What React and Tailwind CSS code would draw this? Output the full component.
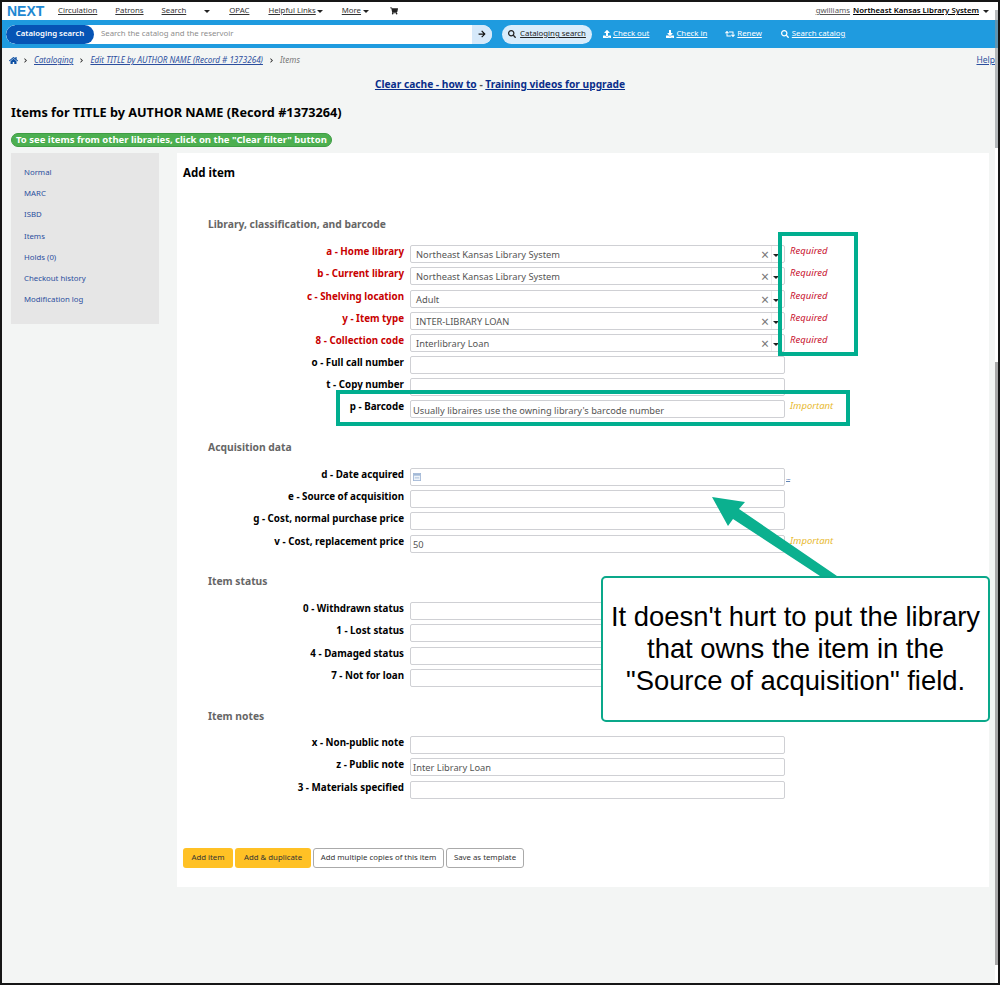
import React from "react";
import { FaHome, FaChevronRight, FaShoppingCart, FaSearch, FaUpload, FaDownload, FaRetweet, FaArrowRight } from "react-icons/fa";

const sideLinks = ["Normal", "MARC", "ISBD", "Items", "Holds (0)", "Checkout history", "Modification log"];

const Caret = ({ className = "" }) => (
  <span className={`inline-block w-0 h-0 border-x-[3px] border-x-transparent border-t-[3px] border-t-[#222] ${className}`} />
);

function Row({ label, value, select, red, note, noteColor, date, h = "h-[22.3px]" }) {
  return (
    <div className={`flex ${h}`}>
      <div className={`w-[227px] text-right font-bold text-[9.8px] leading-[14px] ${red ? "text-[#c80000]" : "text-black"}`}>{label}</div>
      <div className={`ml-[6px] w-[375px] h-[18px] bg-white border border-[#cfd0d4] rounded-[2px] flex items-center relative text-[9.3px] text-[#555] shrink-0 ${select ? "pl-[5px]" : "pl-[2px]"}`}>
        {date && (
          <svg width="8" height="8" viewBox="0 0 9 9" className="opacity-70">
            <rect x="0.5" y="0.5" width="8" height="8" fill="#e6eef7" stroke="#7c9cc6" />
            <rect x="1" y="1" width="7" height="2" fill="#7c9cc6" />
            <rect x="2" y="5" width="5" height="1" fill="#7c9cc6" />
          </svg>
        )}
        <span className="mt-[2px]">{value}</span>
        {select && (
          <>
            <span className="absolute right-[15px] top-[1px] text-[14px] leading-[16px] text-[#777]">×</span>
            <span className="absolute right-[12px] top-0 h-full w-px bg-[#eee]" />
            <Caret className="absolute right-[5px] top-[8px]" />
          </>
        )}
      </div>
      {note && <i className={`ml-[5px] text-[9.5px] leading-[14px] mt-[-1px] ${noteColor}`}>{note}</i>}
      {date && <span className="ml-px mt-[6px] text-[7px] leading-[8px] tracking-[-0.5px] text-[#5f83b4] underline">...</span>}
    </div>
  );
}

const Legend = ({ children, className = "" }) => (
  <div className={`ml-[31px] font-bold text-[10.3px] leading-[14px] text-[#666] ${className}`}>{children}</div>
);

function NavLink({ children, className = "" }) {
  return <span className={`underline whitespace-nowrap ${className}`}>{children}</span>;
}

export default function App() {
  return (
    <div className="relative w-[1000px] h-[985px] overflow-hidden bg-[#f3f5f4] border-y-2 border-x-[2px] border-[#161616] font-['Noto_Sans',sans-serif]">
      {/* top nav */}
      <div className="h-[18px] bg-white flex items-center text-[7.8px] text-[#333] relative">
        <span className="ml-[5px] w-[51px] font-['Liberation_Sans',sans-serif] font-bold text-[14px] mt-[1px] text-[#1e88d2]">NEXT</span>
        <NavLink>Circulation</NavLink>
        <NavLink className="ml-[18px]">Patrons</NavLink>
        <NavLink className="ml-[18px]">Search</NavLink>
        <Caret className="ml-[18px]" />
        <NavLink className="ml-[19px]">OPAC</NavLink>
        <NavLink className="ml-[19px]">Helpful Links</NavLink>
        <Caret className="ml-[1px]" />
        <NavLink className="ml-[19px]">More</NavLink>
        <Caret className="ml-[2px]" />
        <FaShoppingCart className="ml-[21px] text-[8px] text-[#222]" />
        <div className="ml-auto mr-[9px] flex items-center">
          <NavLink className="text-[#555]">gwilliams</NavLink>
          <NavLink className="ml-[3px] font-semibold text-black">Northeast Kansas Library System</NavLink>
          <Caret className="ml-[4px]" />
        </div>
      </div>

      {/* search bar */}
      <div className="h-[28px] bg-[#1f9bdf] flex items-center text-[7.8px] text-white">
        <div className="ml-[4px] w-[486px] h-[19px] rounded-full bg-white flex items-center overflow-hidden">
          <div className="w-[88px] h-full rounded-full bg-[#0654b5] font-semibold flex items-center justify-center">Cataloging search</div>
          <div className="flex-1 pl-[7px] text-[#8d8d8d]">Search the catalog and the reservoir</div>
          <div className="w-[20px] h-full bg-[#d6e9fa] flex items-center justify-center">
            <FaArrowRight className="text-[8px] text-[#111]" />
          </div>
        </div>
        <div className="ml-[10px] w-[90px] h-[19px] rounded-full bg-[#d9ecfb] flex items-center justify-center text-[#222]">
          <FaSearch className="text-[8px] mr-[4px]" />
          <span className="underline">Cataloging search</span>
        </div>
        <FaUpload className="ml-[11px] text-[8px]" />
        <NavLink className="ml-[2px]">Check out</NavLink>
        <FaDownload className="ml-[17px] text-[8px]" />
        <NavLink className="ml-[2px]">Check in</NavLink>
        <FaRetweet className="ml-[18px] text-[10px]" />
        <NavLink className="ml-[2px]">Renew</NavLink>
        <FaSearch className="ml-[19px] text-[8px]" />
        <NavLink className="ml-[3px]">Search catalog</NavLink>
      </div>

      {/* breadcrumb */}
      <div className="h-[24px] flex items-center text-[8.1px] pl-[7px] pr-[3px] pt-[1px]">
        <FaHome className="text-[9px] text-[#0b4ea2]" />
        <FaChevronRight className="ml-[5px] text-[5px] text-[#222]" />
        <i className="ml-[6px] underline text-[#2c4f9e]">Cataloging</i>
        <FaChevronRight className="ml-[6px] text-[5px] text-[#222]" />
        <i className="ml-[6px] underline text-[#2c4f9e]">Edit TITLE by AUTHOR NAME (Record # 1373264)</i>
        <FaChevronRight className="ml-[6px] text-[5px] text-[#222]" />
        <i className="ml-[6px] text-[#777]">Items</i>
        <span className="ml-auto underline text-[#2c4f9e] text-[8.5px]">Help</span>
      </div>

      <div className="mt-[5px] h-[16px] text-center text-[10.2px] font-bold leading-[14px] text-[#555]">
        <span className="underline text-[#0a2e8a]">Clear cache - how to</span> - <span className="underline text-[#0a2e8a]">Training videos for upgrade</span>
      </div>

      <h1 className="mt-[9px] ml-[9px] h-[20px] font-bold text-[12.7px] leading-[20px] text-black">Items for TITLE by AUTHOR NAME (Record #1373264)</h1>

      <div className="mt-[11px] ml-[9px] w-[321px] h-[14px] rounded-full bg-[#4caf50] border border-[#3f9c44] text-white font-bold text-[9.5px] leading-[12px] pl-[4px] whitespace-nowrap">
        To see items from other libraries, click on the "Clear filter" button
      </div>

      <div className="mt-[6px] flex items-start">
        {/* sidebar */}
        <div className="ml-[9px] w-[148px] h-[171px] bg-[#e6e6e6] pt-[12px] pl-[13px] text-[7.8px] text-[#2c4f9e]">
          {sideLinks.map((l) => (
            <div key={l} className="h-[21.2px] leading-[14px]">{l}</div>
          ))}
        </div>

        {/* main */}
        <div className="ml-[18px] w-[812px] h-[734px] bg-white pt-[12px]">
          <div className="ml-[6px] font-bold text-[11.5px] leading-[16px] text-black">Add item</div>

          <Legend className="mt-[36px]">Library, classification, and barcode</Legend>
          <div className="mt-[14px]">
            <Row label="a - Home library" value="Northeast Kansas Library System" select red note="Required" noteColor="text-[#c8102e]" />
            <Row label="b - Current library" value="Northeast Kansas Library System" select red note="Required" noteColor="text-[#c8102e]" />
            <Row label="c - Shelving location" value="Adult" select red note="Required" noteColor="text-[#c8102e]" />
            <Row label="y - Item type" value="INTER-LIBRARY LOAN" select red note="Required" noteColor="text-[#c8102e]" />
            <Row label="8 - Collection code" value="Interlibrary Loan" select red note="Required" noteColor="text-[#c8102e]" />
            <Row label="o - Full call number" h="h-[22px]" />
            <Row label="t - Copy number" h="h-[22px]" />
            <Row label="p - Barcode" value="Usually libraires use the owning library's barcode number" note="Important" noteColor="text-[#e8b92f]" />
          </div>

          <Legend className="mt-[17px]">Acquisition data</Legend>
          <div className="mt-[14px]">
            <Row label="d - Date acquired" date />
            <Row label="e - Source of acquisition" />
            <Row label="g - Cost, normal purchase price" />
            <Row label="v - Cost, replacement price" value="50" note="Important" noteColor="text-[#e8b92f]" />
          </div>

          <Legend className="mt-[17px]">Item status</Legend>
          <div className="mt-[14px]">
            <Row label="0 - Withdrawn status" />
            <Row label="1 - Lost status" />
            <Row label="4 - Damaged status" />
            <Row label="7 - Not for loan" />
          </div>

          <Legend className="mt-[18px]">Item notes</Legend>
          <div className="mt-[13px]">
            <Row label="x - Non-public note" />
            <Row label="z - Public note" value="Inter Library Loan" />
            <Row label="3 - Materials specified" />
          </div>

          <div className="mt-[45px] ml-[6px] flex gap-[2px] text-[7.8px] text-[#333]">
            <div className="w-[50px] h-[20px] rounded-[3px] bg-[#ffc125] flex items-center justify-center">Add item</div>
            <div className="w-[76px] h-[20px] rounded-[3px] bg-[#ffc125] flex items-center justify-center">Add &amp; duplicate</div>
            <div className="w-[131px] h-[20px] rounded-[3px] bg-white border border-[#aaa] flex items-center justify-center">Add multiple copies of this item</div>
            <div className="w-[78px] h-[20px] rounded-[3px] bg-white border border-[#aaa] flex items-center justify-center">Save as template</div>
          </div>
        </div>
      </div>

      {/* scrollbar */}
      <div className="absolute right-0 top-[8px] w-[3px] h-[138px] bg-[#8a8f93] opacity-60" />
      <div className="absolute right-0 top-[146px] bottom-0 w-[3px] bg-white" />
      <div className="absolute right-0 top-[360px] h-[603px] w-[3px] bg-[#a9a9a9]" />

      {/* annotations */}
      <div className="absolute left-[776px] top-[230px] w-[80px] h-[124px] border-[4px] border-[#00ae8f]" />
      <div className="absolute left-[334px] top-[388px] w-[514px] h-[36px] border-[4px] border-[#00ae8f]" />
      <svg className="absolute left-[708px] top-[493px]" width="134" height="84" viewBox="0 0 134 84">
        <polygon points="2,2 35,7 29,14 127,81 110,81 23,24 18,31" fill="#0bb08f" />
      </svg>
      <div className="absolute left-[599px] top-[574px] w-[389px] h-[146px] bg-white border-2 border-[#0aa88a] rounded-[5px] flex flex-col items-center justify-center font-['Liberation_Sans',sans-serif] text-[27.4px] leading-[32px] text-black">
        <div>It doesn't hurt to put the library</div>
        <div>that owns the item in the</div>
        <div>"Source of acquisition" field.</div>
      </div>
    </div>
  );
}
